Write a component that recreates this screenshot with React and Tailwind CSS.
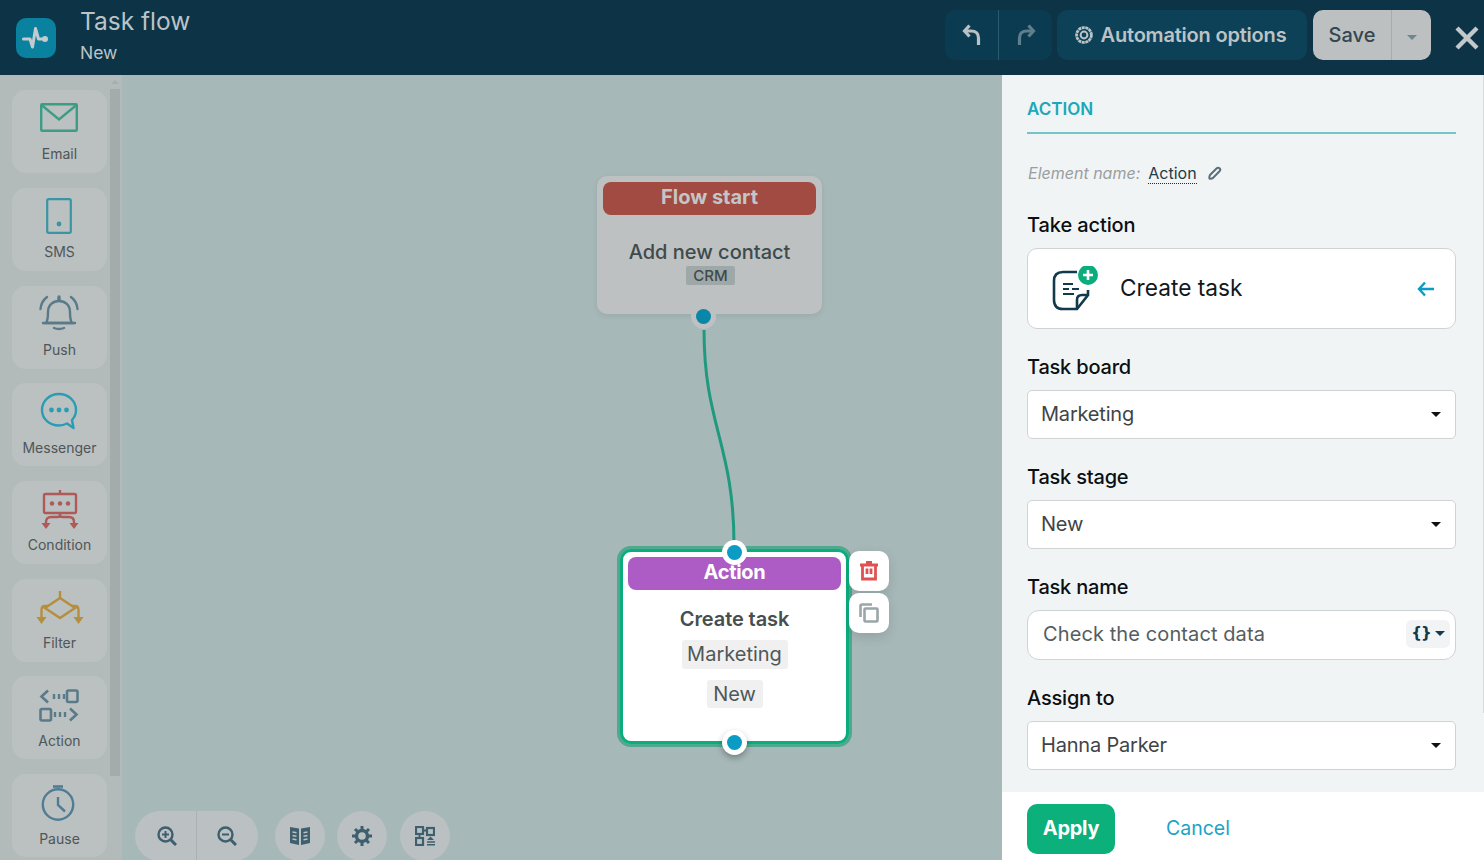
import React from 'react';

const font = "font-['Inter','Noto_Sans',sans-serif]";

// --- sidebar icons ---
const EmailIcon = () => (
  <svg width="38" height="29" viewBox="0 0 38 29" fill="none" stroke="#3d9c84" strokeWidth="2.4">
    <rect x="1.2" y="1.2" width="35.6" height="26.6" rx="1" />
    <path d="M1.5 2 L19 16.5 L36.5 2" />
  </svg>
);
const SmsIcon = () => (
  <svg width="26" height="36" viewBox="0 0 26 36" fill="none" stroke="#3a95a3" strokeWidth="2.2">
    <rect x="1.2" y="1.2" width="23.6" height="33.6" rx="1.5" />
    <circle cx="13" cy="26" r="2.4" fill="#3a95a3" stroke="none" />
  </svg>
);
const PushIcon = () => (
  <svg width="40" height="38" viewBox="0 0 40 38" fill="none" stroke="#5a7a8a" strokeWidth="2.4" strokeLinecap="round">
    <path d="M7 29 C9 26 9 24 9 18 C9 11 14 7 20 7 C26 7 31 11 31 18 C31 24 31 26 33 29 Z" />
    <path d="M4 29 H36" />
    <path d="M20 3 V6" strokeWidth="3.4" />
    <path d="M15 34 Q20 36 25 34" />
    <path d="M1.5 15 C2 10 4 6 8 3" />
    <path d="M38.5 15 C38 10 36 6 32 3" />
  </svg>
);
const MessengerIcon = () => (
  <svg width="38" height="38" viewBox="0 0 38 38" fill="none" stroke="#2a9db5" strokeWidth="2.4" strokeLinejoin="round">
    <path d="M19 2 C9.5 2 2 9 2 18 C2 27 9.5 33.5 19 33.5 C22 33.5 25 32.5 27 31.5 L33.5 36 L32 28 C34.8 25 36 21.5 36 18 C36 9 28.5 2 19 2 Z" />
    <circle cx="11.5" cy="18" r="2.4" fill="#2a9db5" stroke="none" />
    <circle cx="19" cy="18" r="2.4" fill="#2a9db5" stroke="none" />
    <circle cx="26.5" cy="18" r="2.4" fill="#2a9db5" stroke="none" />
  </svg>
);
const ConditionIcon = () => (
  <svg width="38" height="40" viewBox="0 0 38 40" fill="none" stroke="#ad5a58" strokeWidth="2.4">
    <path d="M19 0 V4" />
    <rect x="3" y="4" width="32" height="19" rx="1.5" />
    <circle cx="11" cy="13.5" r="2.2" fill="#ad5a58" stroke="none" />
    <circle cx="19" cy="13.5" r="2.2" fill="#ad5a58" stroke="none" />
    <circle cx="27" cy="13.5" r="2.2" fill="#ad5a58" stroke="none" />
    <path d="M19 23 V25 Q19 27 16 27 H10 Q5 27 5 32 V34 M19 25 Q19 27 22 27 H28 Q33 27 33 32 V34" />
    <path d="M0.5 33 H9.5 L5 39 Z M28.5 33 H37.5 L33 39 Z" fill="#ad5a58" stroke="none" />
  </svg>
);
const FilterIcon = () => (
  <svg width="48" height="34" viewBox="0 0 48 34" fill="none" stroke="#b58f3e" strokeWidth="2.4">
    <path d="M24 0 V7" />
    <path d="M24 7 L39 17 L24 27 L9 17 Z" />
    <path d="M12 15 H9 Q5.5 15 5.5 19 V27 M36 15 H39 Q42.5 15 42.5 19 V27" />
    <path d="M0.5 26 H10.5 L5.5 33 Z M37.5 26 H47.5 L42.5 33 Z" fill="#b58f3e" stroke="none" />
  </svg>
);
const ActionIcon = () => (
  <svg width="40" height="33" viewBox="0 0 40 33" fill="none" stroke="#5a7a8a" strokeWidth="2.6">
    <path d="M9 1.5 L2.5 7.5 L9 13.5" />
    <path d="M15 5 V10 M20 5 V10 M25 5 V10" strokeWidth="2.4" />
    <rect x="28" y="1.5" width="10.5" height="11.5" rx="1.5" />
    <rect x="1.5" y="20" width="10.5" height="11.5" rx="1.5" />
    <path d="M16 23 V28 M21 23 V28 M26 23 V28" strokeWidth="2.4" />
    <path d="M31 19.5 L37.5 25.5 L31 31.5" />
  </svg>
);
const PauseIcon = () => (
  <svg width="34" height="36" viewBox="0 0 34 36" fill="none" stroke="#4f7d94" strokeWidth="2.4">
    <path d="M12 1.5 H22" strokeWidth="2.6" />
    <circle cx="17" cy="19.5" r="15.2" />
    <path d="M17 12 V20 L24 26.5" />
  </svg>
);

const tools = [
  { label: 'Email', Icon: EmailIcon, pt: 'pt-[12px]', h: 'h-[30px] -ml-[2px]', mb: 'mb-[10px]' },
  { label: 'SMS', Icon: SmsIcon, pt: 'pt-[9px]', h: 'h-[38px] -ml-[2px]', mb: 'mb-[10px]' },
  { label: 'Push', Icon: PushIcon, pt: 'pt-[8px]', h: 'h-[38px] -ml-px', mb: 'mb-[10px]' },
  { label: 'Messenger', Icon: MessengerIcon, pt: 'pt-[9px]', h: 'h-[38px] -ml-[2px]', mb: 'mb-[9px]' },
  { label: 'Condition', Icon: ConditionIcon, pt: 'pt-[10px]', h: 'h-[38px]', mb: 'mb-[10px]' },
  { label: 'Filter', Icon: FilterIcon, pt: 'pt-[12px]', h: 'h-[34px]', mb: 'mb-[10px]' },
  { label: 'Action', Icon: ActionIcon, pt: 'pt-[12px]', h: 'h-[34px] -ml-px', mb: 'mb-[9px]' },
  { label: 'Pause', Icon: PauseIcon, pt: 'pt-[10px]', h: 'h-[38px] -ml-[3px]', mb: 'mb-[9px]' },
];

const ToolCard = ({ label, Icon, pt, h, mb }) => (
  <div className={`w-[95px] h-[83px] shrink-0 rounded-[14px] bg-[#bbc0c1] flex flex-col items-center ${pt}`}>
    <div className={`${h} flex items-center justify-center`}><Icon /></div>
    <span className={`mt-auto ${mb} text-[14px] leading-[18px] text-[#4e5658]`}>{label}</span>
  </div>
);

const Caret = ({ color = '#111' }) => (
  <svg width="10" height="5" viewBox="0 0 10 5"><path d="M0 0 H10 L5 5 Z" fill={color} /></svg>
);

const Field = ({ label, value, className = '' }) => (
  <div className={className}>
    <div className="text-[20px] leading-[24px] font-medium text-[#0b0f12] tracking-[-0.2px]">{label}</div>
    <div className="mt-[11px] h-[49px] bg-white border border-[#cfd3d4] rounded-[5px] flex items-center justify-between pl-[13px] pr-[14px]">
      <span className="text-[20px] text-[#3f4547] tracking-[-0.2px] pb-[2px]">{value}</span>
      <Caret />
    </div>
  </div>
);

const ToolbarButton = ({ children, className = '' }) => (
  <div className={`w-[50px] h-[50px] rounded-full bg-[#bbc1c2] flex items-center justify-center ${className}`}>{children}</div>
);

const iconDark = '#3e5f6e';

export default function App() {
  return (
    <div className={`w-[1484px] h-[860px] overflow-hidden flex flex-col ${font}`}>
      {/* top bar */}
      <header className="h-[75px] shrink-0 bg-[#0c3346] flex items-center pl-4 pr-[5px]">
        <div className="w-10 h-10 rounded-[10px] bg-[#0a819f] flex items-center justify-center">
          <svg width="28" height="24" viewBox="0 0 28 24" fill="none" stroke="#c3cbce" strokeWidth="3" strokeLinejoin="round" strokeLinecap="round">
            <path d="M1.5 13 H8 L10.5 21 L13.5 2.5 L16.5 13 H21" />
            <circle cx="23" cy="13" r="3" fill="#c3cbce" stroke="none" />
          </svg>
        </div>
        <div className="ml-[24px] text-[#bcc3c6]">
          <div className="text-[24.5px] leading-[30px] -mt-[5px]">Task flow</div>
          <div className="text-[17.5px] leading-[22px] mt-[6px]">New</div>
        </div>

        <div className="ml-auto flex items-center -mt-[5px]">
          <div className="h-[50px] w-[107px] rounded-[10px] bg-[#0b3b50] flex">
            <div className="w-[54px] flex items-center justify-center border-r border-[#2a5a6e]">
              <svg width="20" height="22" viewBox="0 0 20 22" fill="none" stroke="#b9c1c4" strokeWidth="3.2">
                <path d="M7.5 1.5 L2.5 7 L7.5 12.5" />
                <path d="M3 7 H9 C14 7 16.5 10 16.5 14 V21" />
              </svg>
            </div>
            <div className="flex-1 flex items-center justify-center">
              <svg width="20" height="22" viewBox="0 0 20 22" fill="none" stroke="#5f7f8c" strokeWidth="3.2">
                <path d="M12.5 1.5 L17.5 7 L12.5 12.5" />
                <path d="M17 7 H11 C6 7 3.5 10 3.5 14 V21" />
              </svg>
            </div>
          </div>
          <div className="ml-[5px] h-[50px] w-[250px] rounded-[10px] bg-[#0d4157] flex items-center justify-center pr-[4px] text-[20px] font-semibold text-[#bcc3c6] tracking-[-0.2px]">
            <svg width="20" height="20" viewBox="0 0 20 20" fill="none" stroke="#bcc3c6" className="mr-[7px]">
              <circle cx="10" cy="10" r="7.4" strokeWidth="2.8" strokeDasharray="3 0.6" />
              <circle cx="10" cy="10" r="3.4" strokeWidth="2" />
            </svg>
            Automation options
          </div>
          <div className="ml-[6px] h-[50px] w-[118px] rounded-[10px] bg-[#bcc0c1] flex">
            <div className="w-[79px] flex items-center justify-center border-r border-[#a6abad] text-[20px] font-medium text-[#34474f]">Save</div>
            <div className="flex-1 flex items-center justify-center pt-[5px]"><Caret color="#6f858f" /></div>
          </div>
          <svg width="24" height="24" viewBox="0 0 24 24" stroke="#c3c8ca" strokeWidth="4.4" className="ml-[24px] mt-[5px]">
            <path d="M2 2 L22 22 M22 2 L2 22" />
          </svg>
        </div>
      </header>

      <div className="flex-1 flex min-h-0">
        {/* sidebar */}
        <aside className="w-[122px] shrink-0 bg-[#b3baba] relative overflow-hidden">
          <div className="pl-3 pt-[15.3px] flex flex-col gap-[14.7px]">
            {tools.map(t => <ToolCard key={t.label} {...t} />)}
          </div>
          <div className="absolute left-[110px] top-[14px] w-[10px] h-[687px] bg-[#a4abab]" />
          <svg width="8" height="4" viewBox="0 0 8 4" className="absolute left-[111px] top-[5px]"><path d="M0 4 L4 0 L8 4 Z" fill="#a6adad" /></svg>
        </aside>

        {/* canvas */}
        <main className="w-[880px] shrink-0 bg-[#a7b8b8] relative overflow-hidden">
          <svg width="880" height="785" className="absolute left-0 top-0" fill="none">
            <path d="M582 255 C582 350 612 370 612 470" stroke="#1f9a7e" strokeWidth="3" />
          </svg>

          {/* flow start node */}
          <div className="absolute left-[475px] top-[101px] w-[225px] h-[138px] rounded-[10px] bg-[#bdc1c2] shadow-[0_2px_6px_rgba(0,0,0,0.08)] p-[6px] flex flex-col items-center">
            <div className="w-full h-[33px] rounded-[8px] bg-[#a24b43] text-[#c3c6c6] text-[20px] leading-[31px] font-bold text-center">Flow start</div>
            <div className="mt-[25px] text-[20px] leading-[24px] font-medium text-[#3f4a4b]">Add new contact</div>
            <div className="mt-[2px] ml-[2px] h-[19px] w-[49px] rounded-[2px] bg-[#9fa8a8] text-[15px] leading-[20px] font-medium text-[#3f4a4b] text-center">CRM</div>
          </div>
          <div className="absolute left-[569px] top-[229px] w-[25px] h-[25px] rounded-full bg-[#bdc1c2] flex items-center justify-center">
            <div className="w-[15px] h-[15px] rounded-full bg-[#0a86a6]" />
          </div>

          {/* selected action node */}
          <div className="absolute left-[495px] top-[471px] w-[235px] h-[201px] rounded-[14px] border-[3px] border-[#4ea98f]">
            <div className="w-full h-full rounded-[11px] border-[3px] border-[#0cad7d] bg-white p-[2px] flex flex-col items-center">
              <div className="w-[213px] h-[33px] mt-[3px] rounded-[8px] bg-[#ad5cc6] text-white text-[20px] leading-[31px] font-bold text-center tracking-[-0.3px]">Action</div>
              <div className="mt-[17px] text-[20px] leading-[24px] font-semibold text-[#454f50] tracking-[-0.1px]">Create task</div>
              <div className="mt-[9px] h-[29px] w-[106px] rounded-[3px] bg-[#f0f0f0] text-[20px] leading-[29px] text-[#4f5858] text-center">Marketing</div>
              <div className="mt-[11px] h-[28px] w-[56px] rounded-[3px] bg-[#f0f0f0] text-[20px] leading-[28px] text-[#4f5858] text-center">New</div>
            </div>
          </div>
          <div className="absolute left-[600px] top-[465px] w-[25px] h-[25px] rounded-full bg-white flex items-center justify-center">
            <div className="w-[15px] h-[15px] rounded-full bg-[#0a9cc5]" />
          </div>
          <div className="absolute left-[600px] top-[655px] w-[25px] h-[25px] rounded-full bg-white shadow-[0_3px_6px_rgba(0,0,0,0.3)] flex items-center justify-center">
            <div className="w-[15px] h-[15px] rounded-full bg-[#0a9cc5]" />
          </div>
          <div className="absolute left-[727px] top-[476px] w-10 h-10 rounded-[10px] bg-white shadow-[0_4px_12px_rgba(0,0,0,0.12)] flex items-center justify-center">
            <svg width="20" height="20" viewBox="0 0 20 20" fill="none" stroke="#e05252" strokeWidth="2.8">
              <path d="M1 4 H19 M7 1.2 H13" />
              <path d="M3.5 4 V18 H16.5 V4" />
              <path d="M8 7.5 V13 M12 7.5 V13" />
            </svg>
          </div>
          <div className="absolute left-[727px] top-[518px] w-10 h-10 rounded-[10px] bg-white shadow-[0_4px_12px_rgba(0,0,0,0.12)] flex items-center justify-center">
            <svg width="20" height="20" viewBox="0 0 20 20" fill="none" stroke="#9aa6a8" strokeWidth="2.6">
              <path d="M1.5 14 V3 Q1.5 1.5 3 1.5 H13" />
              <rect x="5.5" y="5.5" width="13" height="13" rx="1" />
            </svg>
          </div>

          {/* bottom tools */}
          <div className="absolute left-[13px] top-[736px] flex gap-[17px]">
            <div className="h-[50px] w-[123px] rounded-full bg-[#bbc1c2] flex">
              <div className="w-[62px] flex items-center justify-center border-r border-[#a9b2b3] pl-[2px]">
                <svg width="20" height="20" viewBox="0 0 20 20" fill="none" stroke={iconDark} strokeWidth="2.4">
                  <circle cx="8.5" cy="8.5" r="7" />
                  <path d="M13.5 13.5 L19 19" strokeWidth="3" />
                  <path d="M5 8.5 H12 M8.5 5 V12" strokeWidth="2" />
                </svg>
              </div>
              <div className="flex-1 flex items-center justify-center pr-[2px]">
                <svg width="20" height="20" viewBox="0 0 20 20" fill="none" stroke={iconDark} strokeWidth="2.4">
                  <circle cx="8.5" cy="8.5" r="7" />
                  <path d="M13.5 13.5 L19 19" strokeWidth="3" />
                  <path d="M5 8.5 H12" strokeWidth="2" />
                </svg>
              </div>
            </div>
            <div className="flex gap-3">
              <ToolbarButton>
                <svg width="20" height="20" viewBox="0 0 20 20" fill={iconDark}>
                  <path d="M0 1 L9 2.5 V19 L0 17 Z M11 2.5 L20 1 V17 L11 19 Z" />
                  <path d="M2.5 6 L6.5 6.8 M2.5 9.5 L6.5 10.3 M2.5 13 L6.5 13.8 M17.5 6 L13.5 6.8 M17.5 9.5 L13.5 10.3 M17.5 13 L13.5 13.8" stroke="#bbc1c2" strokeWidth="1.6" />
                </svg>
              </ToolbarButton>
              <ToolbarButton>
                <svg width="20" height="20" viewBox="0 0 20 20" fill="none" stroke={iconDark}>
                  <circle cx="10" cy="10" r="5.5" strokeWidth="3.4" />
                  <path d="M10 0 V4 M10 16 V20 M0 10 H4 M16 10 H20 M3 3 L5.8 5.8 M14.2 14.2 L17 17 M17 3 L14.2 5.8 M5.8 14.2 L3 17" strokeWidth="3" />
                </svg>
              </ToolbarButton>
              <ToolbarButton className="ml-px">
                <svg width="20" height="20" viewBox="0 0 20 20" fill="none" stroke={iconDark} strokeWidth="2.2">
                  <rect x="1" y="1" width="7" height="7" />
                  <rect x="12" y="2" width="7" height="7" />
                  <rect x="1" y="12" width="7" height="7" />
                  <path d="M4.5 8 V12 M8 4.5 H12" strokeWidth="1.8" />
                  <path d="M15.5 10.5 L19 14 H12 Z" fill={iconDark} stroke="none" />
                  <path d="M12 16 H20 M12 18.8 H20" strokeWidth="1.4" />
                </svg>
              </ToolbarButton>
            </div>
          </div>
        </main>

        {/* right panel */}
        <section className="flex-1 flex flex-col bg-[#f1f4f5] relative">
          <div className="flex-1 pl-[25px] pr-[28px] pt-[24px]">
            <div className="h-[35px] border-b-2 border-[#74c4c9] text-[17px] leading-[21px] font-semibold text-[#1ba8b8]">ACTION</div>
            <div className="mt-[29px] flex items-center h-[20px] text-[16px]">
              <span className="italic text-[#9a9ea0] ml-px">Element name:</span>
              <span className="ml-[8px] text-[#1f3a48] border-b border-dotted border-[#0c3346] leading-[20px]">Action</span>
              <svg width="14" height="14" viewBox="0 0 14 14" fill="none" stroke="#5a6f7a" strokeWidth="2" className="ml-[11px]">
                <path d="M2 9 L8.5 2.5 Q10 1 11.5 2.3 Q13 3.8 11.5 5.3 L5 12 Q3 13 1.5 12.5 Q1 11 2 9 Z" />
              </svg>
            </div>
            <div className="mt-[30px] text-[20px] leading-[24px] font-medium text-[#0b0f12] tracking-[-0.1px]">Take action</div>
            <div className="mt-[11px] h-[81px] bg-white border border-[#cfd3d4] rounded-[10px] flex items-center pl-[24px] pr-[20px]">
              <div className="relative w-[46px] h-[46px]">
                <svg width="46" height="46" viewBox="0 0 46 46" fill="none" stroke="#12394c" strokeWidth="2.6">
                  <path d="M36 24 V29 L25 43 H11 Q2 43 2 34 V15 Q2 6 11 6 H25" />
                  <path d="M36 29 H30 Q25 29 25 34 V43" />
                  <path d="M11 18 H21 M11 23 H17 M20 23 H27 M11 28 H22" strokeWidth="2.2" />
                  <circle cx="36" cy="9" r="10" fill="#0cad7d" stroke="none" />
                  <path d="M36 4 V14 M31 9 H41" stroke="white" strokeWidth="2.6" />
                </svg>
              </div>
              <span className="ml-[22px] text-[22.7px] text-[#12181c]">Create task</span>
              <svg width="18" height="16" viewBox="0 0 18 16" fill="none" stroke="#0a9cc5" strokeWidth="2.4" className="ml-auto">
                <path d="M8 1.5 L2 8 L8 14.5 M2 8 H17" />
              </svg>
            </div>
            <Field label="Task board" value="Marketing" className="mt-[26px]" />
            <Field label="Task stage" value="New" className="mt-[26px]" />
            <div className="mt-[26px]">
              <div className="text-[20px] leading-[24px] font-medium text-[#0b0f12] tracking-[-0.2px]">Task name</div>
              <div className="mt-[11px] h-[50px] bg-white border border-[#cfd3d4] rounded-[12px] flex items-center justify-between pl-[15px] pr-[5px]">
                <span className="text-[20px] text-[#555d60] tracking-[0.1px] pb-[2px]">Check the contact data</span>
                <div className="w-[44px] h-[28px] rounded-[6px] bg-[#f1f3f4] flex items-center justify-center gap-[4px] text-[#12394c] text-[15px] font-bold -mt-[3px]">
                  <span className="tracking-[-1px] font-['DejaVu_Sans',sans-serif] leading-[15px]">{'{}'}</span>
                  <Caret color="#12394c" />
                </div>
              </div>
            </div>
            <Field label="Assign to" value="Hanna Parker" className="mt-[26px]" />
          </div>
          <footer className="h-[68px] shrink-0 bg-white pl-[25px] pt-[12px] flex items-start">
            <div className="w-[88px] h-[50px] rounded-[10px] bg-[#0cb07b] text-white text-[20px] leading-[48px] font-bold text-center tracking-[-0.3px]">Apply</div>
            <div className="ml-[51px] h-[50px] leading-[48px] text-[19.5px] text-[#1ba3c6]">Cancel</div>
          </footer>
          <div className="absolute right-0 top-0 w-px h-[638px] bg-[#d9dcdd]" />
        </section>
      </div>
    </div>
  );
}
